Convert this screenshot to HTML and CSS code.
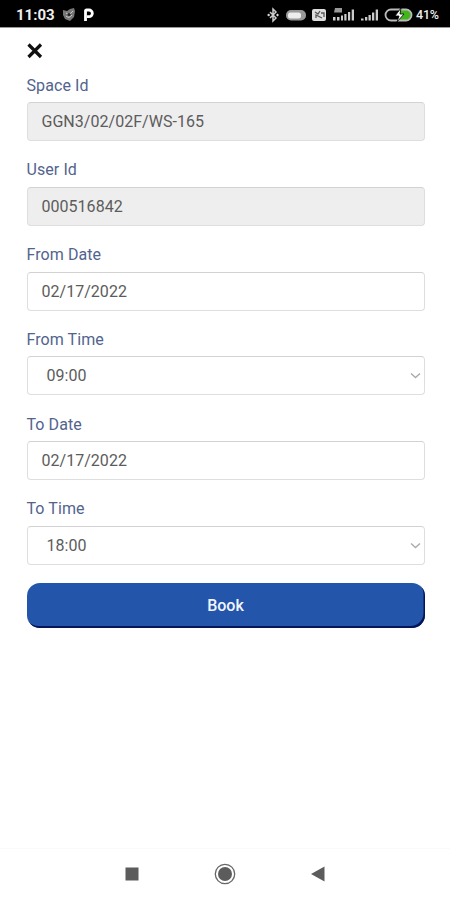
FILE: index.html
```html
<!DOCTYPE html>
<html lang="en">
<head>
<meta charset="utf-8">
<meta name="viewport" content="width=device-width, initial-scale=1">
<title>Book a space</title>
<link rel="stylesheet" href="styles.css">
</head>
<body>
<header class="status">
  <span class="clock">11:03</span>
  <svg class="notifications" width="36" height="16" viewBox="0 0 36 16">
    <path d="M1 3 L5 4 L8 2 L12 1 L13 4 L12 10 L8 14 L3 12 L1 8Z" fill="#777"/>
    <path d="M4 6 Q7 9 11 4 M4 9 Q7 12 10 8" fill="none" stroke="#ccc" stroke-width="1"/>
    <circle cx="7" cy="7.500" r="1.500" fill="#222"/>
    <path d="M23.500 14 V4 Q23.500 3 24.500 3 H27 A3.300 3.300 0 0 1 27 9.700 H25" fill="none" stroke="#fff" stroke-width="2.800"/>
  </svg>
  <svg class="indicators" width="148" height="18" viewBox="0 0 148 18">
    <path d="M3 6 L9 12 L6 15 V3 L9 6 L3 12" fill="none" stroke="#ccc" stroke-width="1.500"/>
    <path d="M0 9 L2 7.500 L3 9 L2 10.500Z M9 9 L10.500 7.500 L12 9 L10.500 10.500Z" fill="#ddd"/>
    <rect x="19" y="4" width="20" height="10.500" rx="5" fill="#999"/>
    <rect x="21" y="6.500" width="13" height="6" rx="2.500" fill="#eee"/>
    <rect x="45" y="3" width="14" height="12" rx="2" fill="#ddd"/>
    <path d="M48 6 L51 8 L53 5 M49 12 V9 L55 12 M54 7 H57 V11" fill="none" stroke="#555" stroke-width="1.300"/>
    <path d="M68 2 H75 V6.500 H67Z" fill="#999"/>
    <path d="M66 14.500 V11 H68.500 V14.500Z M70 14.500 V11 H72.500 V14.500Z M74 14.500 V9.500 H76 V14.500Z M77.300 14.500 V8 H79.500 V14.500Z M81 14.500 V6 H83.200 V14.500Z M84.700 14.500 V3.500 H87 V14.500Z" fill="#ccc"/>
    <path d="M94 14.500 V12.500 H96.500 V14.500Z M98 14.500 V11 H100.300 V14.500Z M101.500 14.500 V9 H103.800 V14.500Z M105 14.500 V6.500 H107.300 V14.500Z M108.700 14.500 V3.500 H111 V14.500Z" fill="#ccc"/>
    <path d="M134 4 H139 A5 5 0 0 1 139 14 H131Z" fill="#43b51c"/>
    <rect x="118.500" y="3.500" width="26" height="11" rx="5.500" fill="none" stroke="#bbb" stroke-width="1.800"/>
    <path d="M134 2 L128 10 H132 L130 16 L137 8 H133Z" fill="#fff" stroke="#000" stroke-width=".8"/>
  </svg>
  <span class="charge">41%</span>
</header>
<main class="page">
  <button class="close" type="button" aria-label="Close">
    <svg width="16" height="16" viewBox="0 0 16 16"><path d="M1.500 1.500 L14 14 M14 1.500 L1.500 14" stroke="#111" stroke-width="3.200"/></svg>
  </button>
  <form class="form">
    <div class="field"><label class="label">Space Id</label><div class="control locked">GGN3/02/02F/WS-165</div></div>
    <div class="field"><label class="label">User Id</label><div class="control locked">000516842</div></div>
    <div class="field"><label class="label">From Date</label><div class="control">02/17/2022</div></div>
    <div class="field"><label class="label">From Time</label><div class="control select">09:00<svg class="chevron" width="11" height="7" viewBox="0 0 11 7"><path d="M1 1.500 L5.500 5.500 L10 1.500"/></svg></div></div>
    <div class="field"><label class="label">To Date</label><div class="control">02/17/2022</div></div>
    <div class="field"><label class="label">To Time</label><div class="control select">18:00<svg class="chevron" width="11" height="7" viewBox="0 0 11 7"><path d="M1 1.500 L5.500 5.500 L10 1.500"/></svg></div></div>
    <button class="book" type="button">Book</button>
  </form>
</main>
<nav class="navbar">
  <svg width="14" height="14" viewBox="0 0 14 14"><rect x=".5" y=".5" width="13" height="13" fill="#5c5c5c"/></svg>
  <svg width="22" height="22" viewBox="0 0 22 22"><circle cx="11" cy="11" r="9.700" fill="none" stroke="#666" stroke-width="1.300"/><circle cx="11" cy="11" r="7" fill="#5c5c5c"/></svg>
  <svg width="14" height="16" viewBox="0 0 14 16"><path d="M0 8 L13.500 .5 V15.500Z" fill="#5c5c5c"/></svg>
</nav>
</body>
</html>
```
FILE: styles.css
```css
* { box-sizing: border-box; }
body {
  margin: 0;
  height: 900px;
  display: flex;
  flex-direction: column;
  background: #fff;
  font-family: Roboto, "Liberation Sans", sans-serif;
}
.status {
  height: 28px;
  flex: none;
  display: flex;
  align-items: center;
  padding: 2px 10px 0 16px;
  background: #000;
  border-bottom: 1px solid #999;
  color: #eee;
}
.clock { width: 46px; font-size: 15px; font-weight: 700; letter-spacing: 0; }
.notifications { flex: none; }
.indicators { flex: none; margin-left: auto; }
.charge { width: 24px; margin-left: 1px; font-size: 12.5px; font-weight: 500; letter-spacing: -.2px; }
.page { flex: 1; padding: 14.5px 25.5px 0 26.5px; }
.close {
  display: block;
  width: 16px;
  height: 16px;
  padding: 0;
  border: 0;
  background: none;
}
.close svg { display: block; }
.form { padding-top: 17px; }
.field { height: 84.75px; }
.label {
  display: block;
  height: 26.5px;
  line-height: 19px;
  font-size: 16px;
  letter-spacing: .08px;
  color: #52648e;
}
.control {
  height: 39px;
  display: flex;
  align-items: center;
  padding: 0 14px;
  border: 1px solid #dedede;
  border-top-color: #d2d2d2;
  border-radius: 4px;
  font-size: 16px;
  letter-spacing: .03px;
  color: #5c5c5c;
}
.locked { background: #eee; }
.select { justify-content: space-between; padding: 0 3px 0 19px; }
.chevron { fill: none; stroke: #aaa; stroke-width: 1.4; }
.book {
  display: block;
  width: 100%;
  height: 45.5px;
  margin-top: -1.5px;
  padding: 0;
  border: 0;
  border-radius: 13px;
  background: #2355aa;
  box-shadow: inset -1.5px -2px 0 #06145c;
  color: #f2f5ff;
  font: 500 16px Roboto, sans-serif;
}
.navbar {
  height: 52px;
  flex: none;
  display: flex;
  align-items: center;
  justify-content: center;
  gap: 75px;
  padding-bottom: 2px;
  border-top: 1px solid #fafafa;
}
```
